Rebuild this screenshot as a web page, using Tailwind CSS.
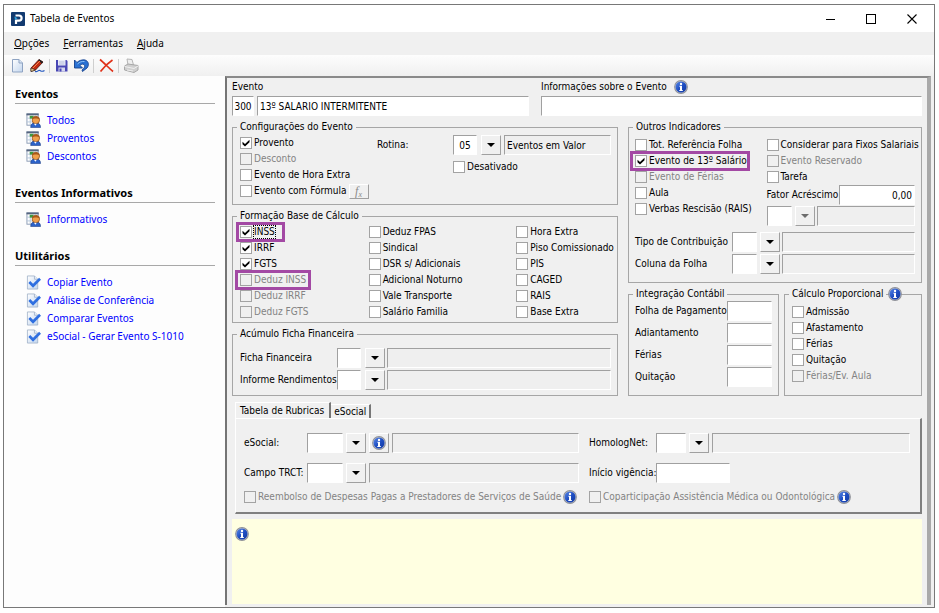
<!DOCTYPE html>
<html lang="pt-BR">
<head>
    <meta charset="UTF-8">
    <meta name="viewport" content="width=device-width, initial-scale=1.0">
    <title>Tabela de Eventos</title>
    <script src="https://cdn.jsdelivr.net/npm/@tailwindcss/browser@4"></script>
</head>
<body class="min-h-screen flex bg-white pt-1 pr-1 pb-[5px] pl-[3px] text-[10px] text-black font-['Noto_Sans',sans-serif]">

    <!-- Ícones reutilizados -->
    <svg class="absolute size-0" aria-hidden="true">
        <defs>
            <linearGradient id="azul" x1="0" y1="0" x2="1" y2="1">
                <stop offset="0" stop-color="#5b8ae6"/>
                <stop offset="0.5" stop-color="#1f4fc4"/>
                <stop offset="1" stop-color="#1238a0"/>
            </linearGradient>
            <linearGradient id="folha" x1="0" y1="0" x2="1" y2="1">
                <stop offset="0" stop-color="#ffffff"/>
                <stop offset="1" stop-color="#c3d6ee"/>
            </linearGradient>
        </defs>
        <symbol id="info" viewBox="0 0 14 14">
            <circle cx="7" cy="7" r="6.9" fill="#8d8f96"/>
            <circle cx="7" cy="7" r="6" fill="#b9bdca"/>
            <circle cx="7" cy="7" r="5.5" fill="url(#azul)"/>
            <circle cx="7" cy="3.9" r="1.200" fill="#fff"/>
            <path d="M5.4 5.8H8V10H8.8V11H5.300V10H6V6.8H5.4Z" fill="#fff"/>
        </symbol>
        <symbol id="seta" viewBox="0 0 8 4"><path d="M0 0H8L4 4Z" fill="currentColor"/></symbol>
        <symbol id="tabela" viewBox="0 0 16 16">
            <rect x="1" y="1" width="12" height="12" fill="#fff" stroke="#8b9cb5"/>
            <path d="M.5 1.5H13.5" stroke="#55657f" stroke-width="2"/>
            <path d="M1 5.5H13M1 9.5H13M4.5 3V13M8.5 3V13" stroke="#b5c6dc" stroke-width="1"/>
            <rect x="4" y="3" width="4" height="3" fill="#3d9a3d"/>
            <path d="M5 15.5C5 11.5 7 10.5 10 10.5S15.500 11.500 15.500 15.500Z" fill="#2c62c8" stroke="#1a3b80" stroke-width=".6"/>
            <circle cx="10.500" cy="7.500" r="4" fill="#f0a04a" stroke="#7a3d0c" stroke-width=".7"/>
            <path d="M6.500 7C6.500 2.500 14.500 2.500 14.500 7C12.500 5.600 8.500 5.600 6.500 7Z" fill="#a8581a"/>
            <path d="M8.500 11.500L10 13.500L11.500 11.500Z" fill="#fff"/>
        </symbol>
        <symbol id="tarefa" viewBox="0 0 16 16">
            <path d="M1.500 1H9L12.500 4.500V15H1.500Z" fill="url(#folha)" stroke="#9aabc4" stroke-width=".8"/>
            <path d="M9 1V4.500H12.500" fill="#e8f0fa" stroke="#9aabc4" stroke-width=".8"/>
            <path d="M3.500 7.500L7.500 11.500L15 4" fill="none" stroke="#2f6fe0" stroke-width="2.800"/>
        </symbol>
    </svg>

    <div class="flex-1 min-w-0 flex flex-col border border-[#787878] bg-[#f0f0f0]">

        <!-- Barra de título -->
        <header class="flex items-center h-[27px] bg-white pl-[7px] pr-[2px]">
            <svg class="size-[14px]" viewBox="0 0 14 14">
                <rect width="14" height="14" rx="1" fill="#123a70"/>
                <path d="M5 12V8.700H8A2.500 2.500 0 0 0 8 3.500H4.500" fill="none" stroke="#fff" stroke-width="2.200"/>
                <path d="M3.500 4.500L6.500 6.200L4 8Z" fill="#2fa5e0"/>
            </svg>
            <h1 class="ml-[5px] flex-1">Tabela de Eventos</h1>
            <button aria-label="Minimizar" class="w-10 h-full grid place-items-center">
                <svg class="size-[10px]" viewBox="0 0 10 10"><path d="M0 5.500H9" stroke="#000"/></svg>
            </button>
            <button aria-label="Maximizar" class="w-10 h-full grid place-items-center">
                <svg class="size-[10px]" viewBox="0 0 10 10"><rect x=".5" y=".5" width="9" height="9" fill="none" stroke="#000"/></svg>
            </button>
            <button aria-label="Fechar" class="w-[41px] h-full grid place-items-center">
                <svg class="size-[10px]" viewBox="0 0 10 10"><path d="M.5 .5L9.500 9.500M9.500 .5L.5 9.500" stroke="#000" stroke-width="1.100"/></svg>
            </button>
        </header>

        <!-- Menu -->
        <nav class="flex items-center gap-[14px] h-[23px] pl-[10px]">
            <a href="#"><u>O</u>pções</a>
            <a href="#"><u>F</u>erramentas</a>
            <a href="#"><u>A</u>juda</a>
        </nav>

        <!-- Barra de ferramentas -->
        <div class="flex items-center h-[21px] pl-[6px] bg-linear-to-b from-[#fdfdfd] to-[#f0f0f0]">
            <button aria-label="Novo" class="size-[15px]">
                <svg viewBox="0 0 15 15"><path d="M2.500 1.500H9L12.500 5V14H2.500Z" fill="url(#folha)" stroke="#8ea3c2"/><path d="M9 1.500V5H12.500" fill="#dce8f6" stroke="#8ea3c2"/></svg>
            </button>
            <button aria-label="Editar" class="ml-[5px] size-[15px]">
                <svg viewBox="0 0 15 15"><path d="M1 10L9 1.500L13 4L5.500 12L1 13.500Z" fill="#c22a12" stroke="#4a140c" stroke-width=".8"/><path d="M1 10L5.500 12L1 13.500Z" fill="#f0cf90" stroke="#222" stroke-width=".6"/><path d="M8 2.500L12 5.500L13 4L9 1.300Z" fill="#222"/><path d="M3 10L10 3" stroke="#f08a50"/><path d="M5 13.500C8 14.500 8 11.500 10 12.500S12 14 14.500 12.500" fill="none" stroke="#2659c0" stroke-width="1.200"/></svg>
            </button>
            <span class="mx-[4px] w-px h-[14px] bg-[#cfcfcf]"></span>
            <button aria-label="Salvar" class="size-[15px]">
                <svg viewBox="0 0 15 15"><path d="M2 2H12.500L13.500 3V13.500H2Z" fill="#4846b4"/><path d="M4 2H11.500V7.500H4Z" fill="#e9ecf8"/><path d="M5 4H10.500M5 6H10.500" stroke="#b5bcdc"/><path d="M4.500 9.500H11V13.500H4.500Z" fill="#d6d8ee"/><path d="M5.500 10.500H7.500V13.500H5.500Z" fill="#4846b4"/></svg>
            </button>
            <button aria-label="Desfazer" class="ml-[5px] size-[15px]">
                <svg viewBox="0 0 15 15"><path d="M.5 2L3 4.500C5 2.500 8 1.500 11 2C14.500 3 15.500 7 13 10L8.500 13.500L8 12C10.500 10 11.500 8 10 6.500C8.500 5.500 7 6.500 6 7.500L8.500 10H.5Z" fill="#2a72d4" stroke="#15418c" stroke-width=".9"/><path d="M3.500 6C5.500 4 8 3.200 10.500 3.500" fill="none" stroke="#8cc0f4"/></svg>
            </button>
            <span class="mx-[4px] w-px h-[14px] bg-[#cfcfcf]"></span>
            <button aria-label="Excluir" class="ml-px size-[15px]">
                <svg viewBox="0 0 15 15"><path d="M1 1.500C5 5 10 10 14 13.500M13.500 2C9 5 5 9 1.500 13.500" fill="none" stroke="#e03018" stroke-width="1.700"/></svg>
            </button>
            <span class="mx-[4px] w-px h-[14px] bg-[#cfcfcf]"></span>
            <button aria-label="Imprimir" disabled class="ml-px size-[15px]">
                <svg viewBox="0 0 15 15"><path d="M3 1L8 1.500L9.500 7H4Z" fill="#eee" stroke="#b5b5b5"/><path d="M.5 8L4 6L14 7.500V12L10 14.500L.5 12Z" fill="#cfcfcf" stroke="#a8a8a8"/><path d="M.5 8.500L10 10.500L14 8M3 12L9 13" fill="none" stroke="#efefef"/></svg>
            </button>
        </div>

        <div class="flex-1 flex">

            <!-- Painel lateral -->
            <aside class="w-[221px] shrink-0 flex flex-col gap-[19px] bg-[#fdfdfd] pt-[9px] pl-[11px] pr-[10px]">
                <section>
                    <h2 class="h-[19px] text-[11px] leading-[18px] font-bold border-b border-[#a8a8a8]">Eventos</h2>
                    <ul class="mt-[7px] pl-[11px] text-[#0000ff] leading-[18px]">
                        <li><a href="#" class="flex items-center gap-[6px]"><svg class="size-[15px]"><use href="#tabela"/></svg>Todos</a></li>
                        <li><a href="#" class="flex items-center gap-[6px]"><svg class="size-[15px]"><use href="#tabela"/></svg>Proventos</a></li>
                        <li><a href="#" class="flex items-center gap-[6px]"><svg class="size-[15px]"><use href="#tabela"/></svg>Descontos</a></li>
                    </ul>
                </section>
                <section>
                    <h2 class="h-[19px] text-[11px] leading-[18px] font-bold border-b border-[#a8a8a8]">Eventos Informativos</h2>
                    <ul class="mt-[7px] pl-[11px] text-[#0000ff] leading-[18px]">
                        <li><a href="#" class="flex items-center gap-[6px]"><svg class="size-[15px]"><use href="#tabela"/></svg>Informativos</a></li>
                    </ul>
                </section>
                <section>
                    <h2 class="h-[19px] text-[11px] leading-[18px] font-bold border-b border-[#a8a8a8]">Utilitários</h2>
                    <ul class="mt-[7px] pl-[11px] text-[#0000ff] leading-[18px]">
                        <li><a href="#" class="flex items-center gap-[6px]"><svg class="size-[15px]"><use href="#tarefa"/></svg>Copiar Evento</a></li>
                        <li><a href="#" class="flex items-center gap-[6px]"><svg class="size-[15px]"><use href="#tarefa"/></svg>Análise de Conferência</a></li>
                        <li><a href="#" class="flex items-center gap-[6px]"><svg class="size-[15px]"><use href="#tarefa"/></svg>Comparar Eventos</a></li>
                        <li><a href="#" class="flex items-center gap-[6px]"><svg class="size-[15px]"><use href="#tarefa"/></svg>eSocial - Gerar Evento S-1010</a></li>
                    </ul>
                </section>
            </aside>

            <!-- Formulário do evento -->
            <form class="flex-1 flex flex-col min-w-0 mb-[2px] mr-[3px] pl-[5px] pr-[5px] border-t-2 border-l-2 border-r-4 border-t-[#8a8a8a] border-l-[#757575] border-r-[#a9a9a9]
                leading-[16px] font-['DejaVu_Sans_Condensed','DejaVu_Sans',sans-serif] [&_div]:min-w-0
                [&_fieldset]:relative [&_fieldset]:min-w-0 [&_fieldset]:border [&_fieldset]:border-[#a6a6a6] [&_fieldset]:px-[6px]
                [&_legend]:-ml-[2px] [&_legend]:px-[3px] [&_legend]:leading-[14px]
                [&_label]:whitespace-nowrap [&_label]:shrink-0 [&_label:has([type=checkbox])]:flex [&_label:has([type=checkbox])]:h-4 [&_label:has([type=checkbox])]:items-center [&_label:has([type=checkbox])]:gap-[2px] [&_label:has(:disabled)]:text-[#838383]
                [&_[type=checkbox]]:appearance-none [&_[type=checkbox]]:shrink-0 [&_[type=checkbox]]:size-3 [&_[type=checkbox]]:border [&_[type=checkbox]]:border-[#a3a3a3] [&_[type=checkbox]]:bg-white [&_[type=checkbox]:disabled]:bg-[#f0f0f0]
                [&_[type=checkbox]:checked]:before:block [&_[type=checkbox]:checked]:before:size-[10px] [&_[type=checkbox]:checked]:before:bg-black [&_[type=checkbox]:checked]:before:[clip-path:polygon(15%_38%,40%_60%,85%_18%,85%_42%,40%_85%,15%_62%)]
                [&_[type=text]]:h-5 [&_[type=text]]:min-w-0 [&_[type=text]]:px-[2px] [&_[type=text]]:bg-white [&_[type=text]]:border [&_[type=text]]:border-t-[#a0a0a0] [&_[type=text]]:border-l-[#a0a0a0] [&_[type=text]]:border-r-white [&_[type=text]]:border-b-white [&_[type=text]:read-only]:bg-[#efefef]
                [&_button]:h-5 [&_button]:w-5 [&_button]:shrink-0 [&_button]:grid [&_button]:place-items-center [&_button]:border [&_button]:border-t-white [&_button]:border-l-white [&_button]:border-r-[#a0a0a0] [&_button]:border-b-[#a0a0a0]">

                <div class="grid grid-cols-[297fr_381fr] gap-x-3">
                    <div>
                        <label for="codigo" class="block leading-[18px]">Evento</label>
                        <div class="flex gap-[3px]">
                            <input type="text" id="codigo" value="300" class="w-[22px] px-0! text-center">
                            <input type="text" aria-label="Descrição do evento" value="13º SALARIO INTERMITENTE" class="flex-1">
                        </div>
                    </div>
                    <div>
                        <div class="flex items-center gap-[7px] leading-[18px]">
                            <label for="informacoes">Informações sobre o Evento</label>
                            <svg class="size-[14px]"><use href="#info"/></svg>
                        </div>
                        <input type="text" id="informacoes" class="block w-full">
                    </div>
                </div>

                <div class="grid grid-cols-[386fr_294fr] gap-x-[10px] mt-1">
                    <div class="flex flex-col gap-1">
                        <fieldset>
                            <legend>Configurações do Evento</legend>
                            <div class="flex pt-px pb-[5px] pl-[1px]">
                                <div class="w-[137px] shrink-0">
                                    <label><input type="checkbox" checked>Provento</label>
                                    <label><input type="checkbox" disabled>Desconto</label>
                                    <label><input type="checkbox">Evento de Hora Extra</label>
                                    <div class="flex items-center gap-[2px] h-4">
                                        <label><input type="checkbox">Evento com Fórmula</label>
                                        <button type="button" aria-label="Fórmula" class="h-[15px]! font-['Liberation_Serif',serif] italic text-[12px] leading-[12px] text-[#8a8a8a]"><span>f<sub class="text-[8px]">x</sub></span></button>
                                    </div>
                                </div>
                                <div class="flex-1">
                                    <div class="flex items-center">
                                        <label for="rotina" class="w-[76px]">Rotina:</label>
                                        <input type="text" id="rotina" value="05" class="w-6 text-center">
                                        <button type="button" aria-label="Escolher rotina" class="ml-[4px]"><svg class="w-2 h-1"><use href="#seta"/></svg></button>
                                        <input type="text" readonly aria-label="Descrição da rotina" value="Eventos em Valor" class="ml-[3px] flex-1">
                                    </div>
                                    <div class="pl-[76px] pt-[4px]"><label><input type="checkbox">Desativado</label></div>
                                </div>
                            </div>
                        </fieldset>

                        <fieldset>
                            <legend>Formação Base de Cálculo</legend>
                            <div class="grid grid-cols-[129fr_148fr_95fr] pt-px pb-[2px] pl-[1px]">
                                <div>
                                    <label class="relative"><input type="checkbox" checked><span class="leading-3 outline outline-dotted outline-1 outline-black">INSS</span><i class="absolute -left-1 top-[-2px] w-[49px] h-5 border-3 border-[#a349a4]"></i></label>
                                    <label><input type="checkbox" checked>IRRF</label>
                                    <label><input type="checkbox" checked>FGTS</label>
                                    <label class="relative"><input type="checkbox" disabled>Deduz INSS<i class="absolute -left-[5px] top-[-2px] w-[76px] h-5 border-3 border-[#a349a4]"></i></label>
                                    <label><input type="checkbox" disabled>Deduz IRRF</label>
                                    <label><input type="checkbox" disabled>Deduz FGTS</label>
                                </div>
                                <div>
                                    <label><input type="checkbox">Deduz FPAS</label>
                                    <label><input type="checkbox">Sindical</label>
                                    <label><input type="checkbox">DSR s/ Adicionais</label>
                                    <label><input type="checkbox">Adicional Noturno</label>
                                    <label><input type="checkbox">Vale Transporte</label>
                                    <label><input type="checkbox">Salário Familia</label>
                                </div>
                                <div>
                                    <label><input type="checkbox">Hora Extra</label>
                                    <label><input type="checkbox">Piso Comissionado</label>
                                    <label><input type="checkbox">PIS</label>
                                    <label><input type="checkbox">CAGED</label>
                                    <label><input type="checkbox">RAIS</label>
                                    <label><input type="checkbox">Base Extra</label>
                                </div>
                            </div>
                        </fieldset>

                        <fieldset>
                            <legend>Acúmulo Ficha Financeira</legend>
                            <div class="flex flex-col gap-[2px] pt-[7px] pb-[5px] pl-[1px]">
                                <div class="flex items-center">
                                    <label for="ficha" class="w-[97px]">Ficha Financeira</label>
                                    <input type="text" id="ficha" class="w-6">
                                    <button type="button" aria-label="Escolher ficha" class="ml-[4px]"><svg class="w-2 h-1"><use href="#seta"/></svg></button>
                                    <input type="text" readonly aria-label="Descrição da ficha" class="ml-[2px] flex-1">
                                </div>
                                <div class="flex items-center">
                                    <label for="informe" class="w-[97px]">Informe Rendimentos</label>
                                    <input type="text" id="informe" class="w-6">
                                    <button type="button" aria-label="Escolher informe" class="ml-[4px]"><svg class="w-2 h-1"><use href="#seta"/></svg></button>
                                    <input type="text" readonly aria-label="Descrição do informe" class="ml-[2px] flex-1">
                                </div>
                            </div>
                        </fieldset>
                    </div>

                    <div class="flex flex-col gap-1">
                        <fieldset>
                            <legend>Outros Indicadores</legend>
                            <div class="grid grid-cols-[132fr_149fr] pt-[3px]">
                                <div>
                                    <label><input type="checkbox">Tot. Referência Folha</label>
                                    <label class="relative"><input type="checkbox" checked>Evento de 13º Salário<i class="absolute -left-[5px] top-[-2px] w-[120px] h-5 border-3 border-[#a349a4]"></i></label>
                                    <label><input type="checkbox" disabled>Evento de Férias</label>
                                    <label><input type="checkbox">Aula</label>
                                    <label><input type="checkbox">Verbas Rescisão (RAIS)</label>
                                </div>
                                <div>
                                    <label><input type="checkbox">Considerar para Fixos Salariais</label>
                                    <label><input type="checkbox" disabled>Evento Reservado</label>
                                    <label><input type="checkbox">Tarefa</label>
                                    <div class="flex items-center justify-between">
                                        <label for="fator">Fator Acréscimo</label>
                                        <input type="text" id="fator" value="0,00" class="w-[76px] text-right">
                                    </div>
                                    <div class="flex items-center pt-px">
                                        <input type="text" aria-label="Verbas rescisão" class="w-[25px]">
                                        <button type="button" disabled aria-label="Escolher verba" class="ml-[3px] text-[#6d6d6d]"><svg class="w-2 h-1"><use href="#seta"/></svg></button>
                                        <input type="text" readonly aria-label="Descrição da verba" class="ml-[2px] flex-1">
                                    </div>
                                </div>
                            </div>
                            <div class="flex flex-col gap-[2px] pt-[6px] pb-[8px]">
                                <div class="flex items-center">
                                    <label for="contribuicao" class="w-[97px]">Tipo de Contribuição</label>
                                    <input type="text" id="contribuicao" class="w-[25px]">
                                    <button type="button" aria-label="Escolher tipo" class="ml-[3px]"><svg class="w-2 h-1"><use href="#seta"/></svg></button>
                                    <input type="text" readonly aria-label="Descrição do tipo" class="ml-[2px] flex-1">
                                </div>
                                <div class="flex items-center">
                                    <label for="coluna" class="w-[97px]">Coluna da Folha</label>
                                    <input type="text" id="coluna" class="w-[25px]">
                                    <button type="button" aria-label="Escolher coluna" class="ml-[3px]"><svg class="w-2 h-1"><use href="#seta"/></svg></button>
                                    <input type="text" readonly aria-label="Descrição da coluna" class="ml-[2px] flex-1">
                                </div>
                            </div>
                        </fieldset>

                        <div class="grid grid-cols-[151fr_138fr] gap-x-[5px] flex-1">
                            <fieldset>
                                <legend>Integração Contábil</legend>
                                <div class="flex flex-col gap-[2px]">
                                    <div class="flex items-center justify-between"><label for="folha-pag">Folha de Pagamento</label><input type="text" id="folha-pag" class="w-[45px]"></div>
                                    <div class="flex items-center justify-between"><label for="adiantamento">Adiantamento</label><input type="text" id="adiantamento" class="w-[45px]"></div>
                                    <div class="flex items-center justify-between"><label for="ferias">Férias</label><input type="text" id="ferias" class="w-[45px]"></div>
                                    <div class="flex items-center justify-between"><label for="quitacao">Quitação</label><input type="text" id="quitacao" class="w-[45px]"></div>
                                </div>
                            </fieldset>
                            <fieldset>
                                <legend>Cálculo Proporcional</legend>
                                <svg class="absolute right-[19px] -top-[14px] size-[14px]"><use href="#info"/></svg>
                                <div class="pt-[3px] pl-[1px]">
                                    <label><input type="checkbox">Admissão</label>
                                    <label><input type="checkbox">Afastamento</label>
                                    <label><input type="checkbox">Férias</label>
                                    <label><input type="checkbox">Quitação</label>
                                    <label><input type="checkbox" disabled>Férias/Ev. Aula</label>
                                </div>
                            </fieldset>
                        </div>
                    </div>
                </div>

                <!-- Abas -->
                <div class="flex items-end mt-[6px] pl-[3px]">
                    <a href="#" class="h-4 pl-[4px] pr-[5px] border-t border-l border-white border-r-2 border-r-[#777]">Tabela de Rubricas</a>
                    <a href="#" class="h-[14px] leading-[14px] px-[3px] border-t border-t-white border-r-2 border-r-[#777]">eSocial</a>
                </div>
                <div class="ml-[3px] pt-[14px] pb-[7px] pl-[8px] pr-[10px] border-t border-l border-r-2 border-b-2 border-t-white border-l-white border-r-[#808080] border-b-[#808080]">
                    <div class="grid grid-cols-[335fr_321fr] gap-x-[10px] gap-y-[10px]">
                        <div class="flex items-center">
                            <label for="esocial" class="w-[63px]">eSocial:</label>
                            <input type="text" id="esocial" class="w-9">
                            <button type="button" aria-label="Escolher eSocial" class="ml-[3px]"><svg class="w-2 h-1"><use href="#seta"/></svg></button>
                            <button type="button" aria-label="Informações" class="ml-[3px]"><svg class="size-[14px]"><use href="#info"/></svg></button>
                            <input type="text" readonly aria-label="Descrição eSocial" class="ml-[3px] flex-1">
                        </div>
                        <div class="flex items-center">
                            <label for="homolognet" class="w-[67px]">HomologNet:</label>
                            <input type="text" id="homolognet" class="w-[30px]">
                            <button type="button" aria-label="Escolher HomologNet" class="ml-[3px]"><svg class="w-2 h-1"><use href="#seta"/></svg></button>
                            <input type="text" readonly aria-label="Descrição HomologNet" class="ml-[3px] flex-1">
                        </div>
                        <div class="flex items-center">
                            <label for="trct" class="w-[63px]">Campo TRCT:</label>
                            <input type="text" id="trct" class="w-9">
                            <button type="button" aria-label="Escolher campo" class="ml-[3px]"><svg class="w-2 h-1"><use href="#seta"/></svg></button>
                            <input type="text" readonly aria-label="Descrição do campo" class="ml-[3px] flex-1">
                        </div>
                        <div class="flex items-center">
                            <label for="vigencia" class="w-[67px]">Início vigência:</label>
                            <input type="text" id="vigencia" class="w-[74px]">
                        </div>
                    </div>
                    <div class="grid grid-cols-[335fr_321fr] gap-x-[10px] pt-[6px]">
                        <div class="flex items-center gap-[2px]"><label><input type="checkbox" disabled>Reembolso de Despesas Pagas a Prestadores de Serviços de Saúde</label><svg class="size-[14px] shrink-0"><use href="#info"/></svg></div>
                        <div class="flex items-center gap-[2px]"><label><input type="checkbox" disabled>Coparticipação Assistência Médica ou Odontológica</label><svg class="size-[14px] shrink-0"><use href="#info"/></svg></div>
                    </div>
                </div>

                <!-- Área de avisos -->
                <div class="flex-1 mt-[5px] mb-px pt-2 pl-[3px] bg-[#ffffe1]">
                    <svg class="size-[14px]"><use href="#info"/></svg>
                </div>
            </form>
        </div>
    </div>
</body>
</html>
